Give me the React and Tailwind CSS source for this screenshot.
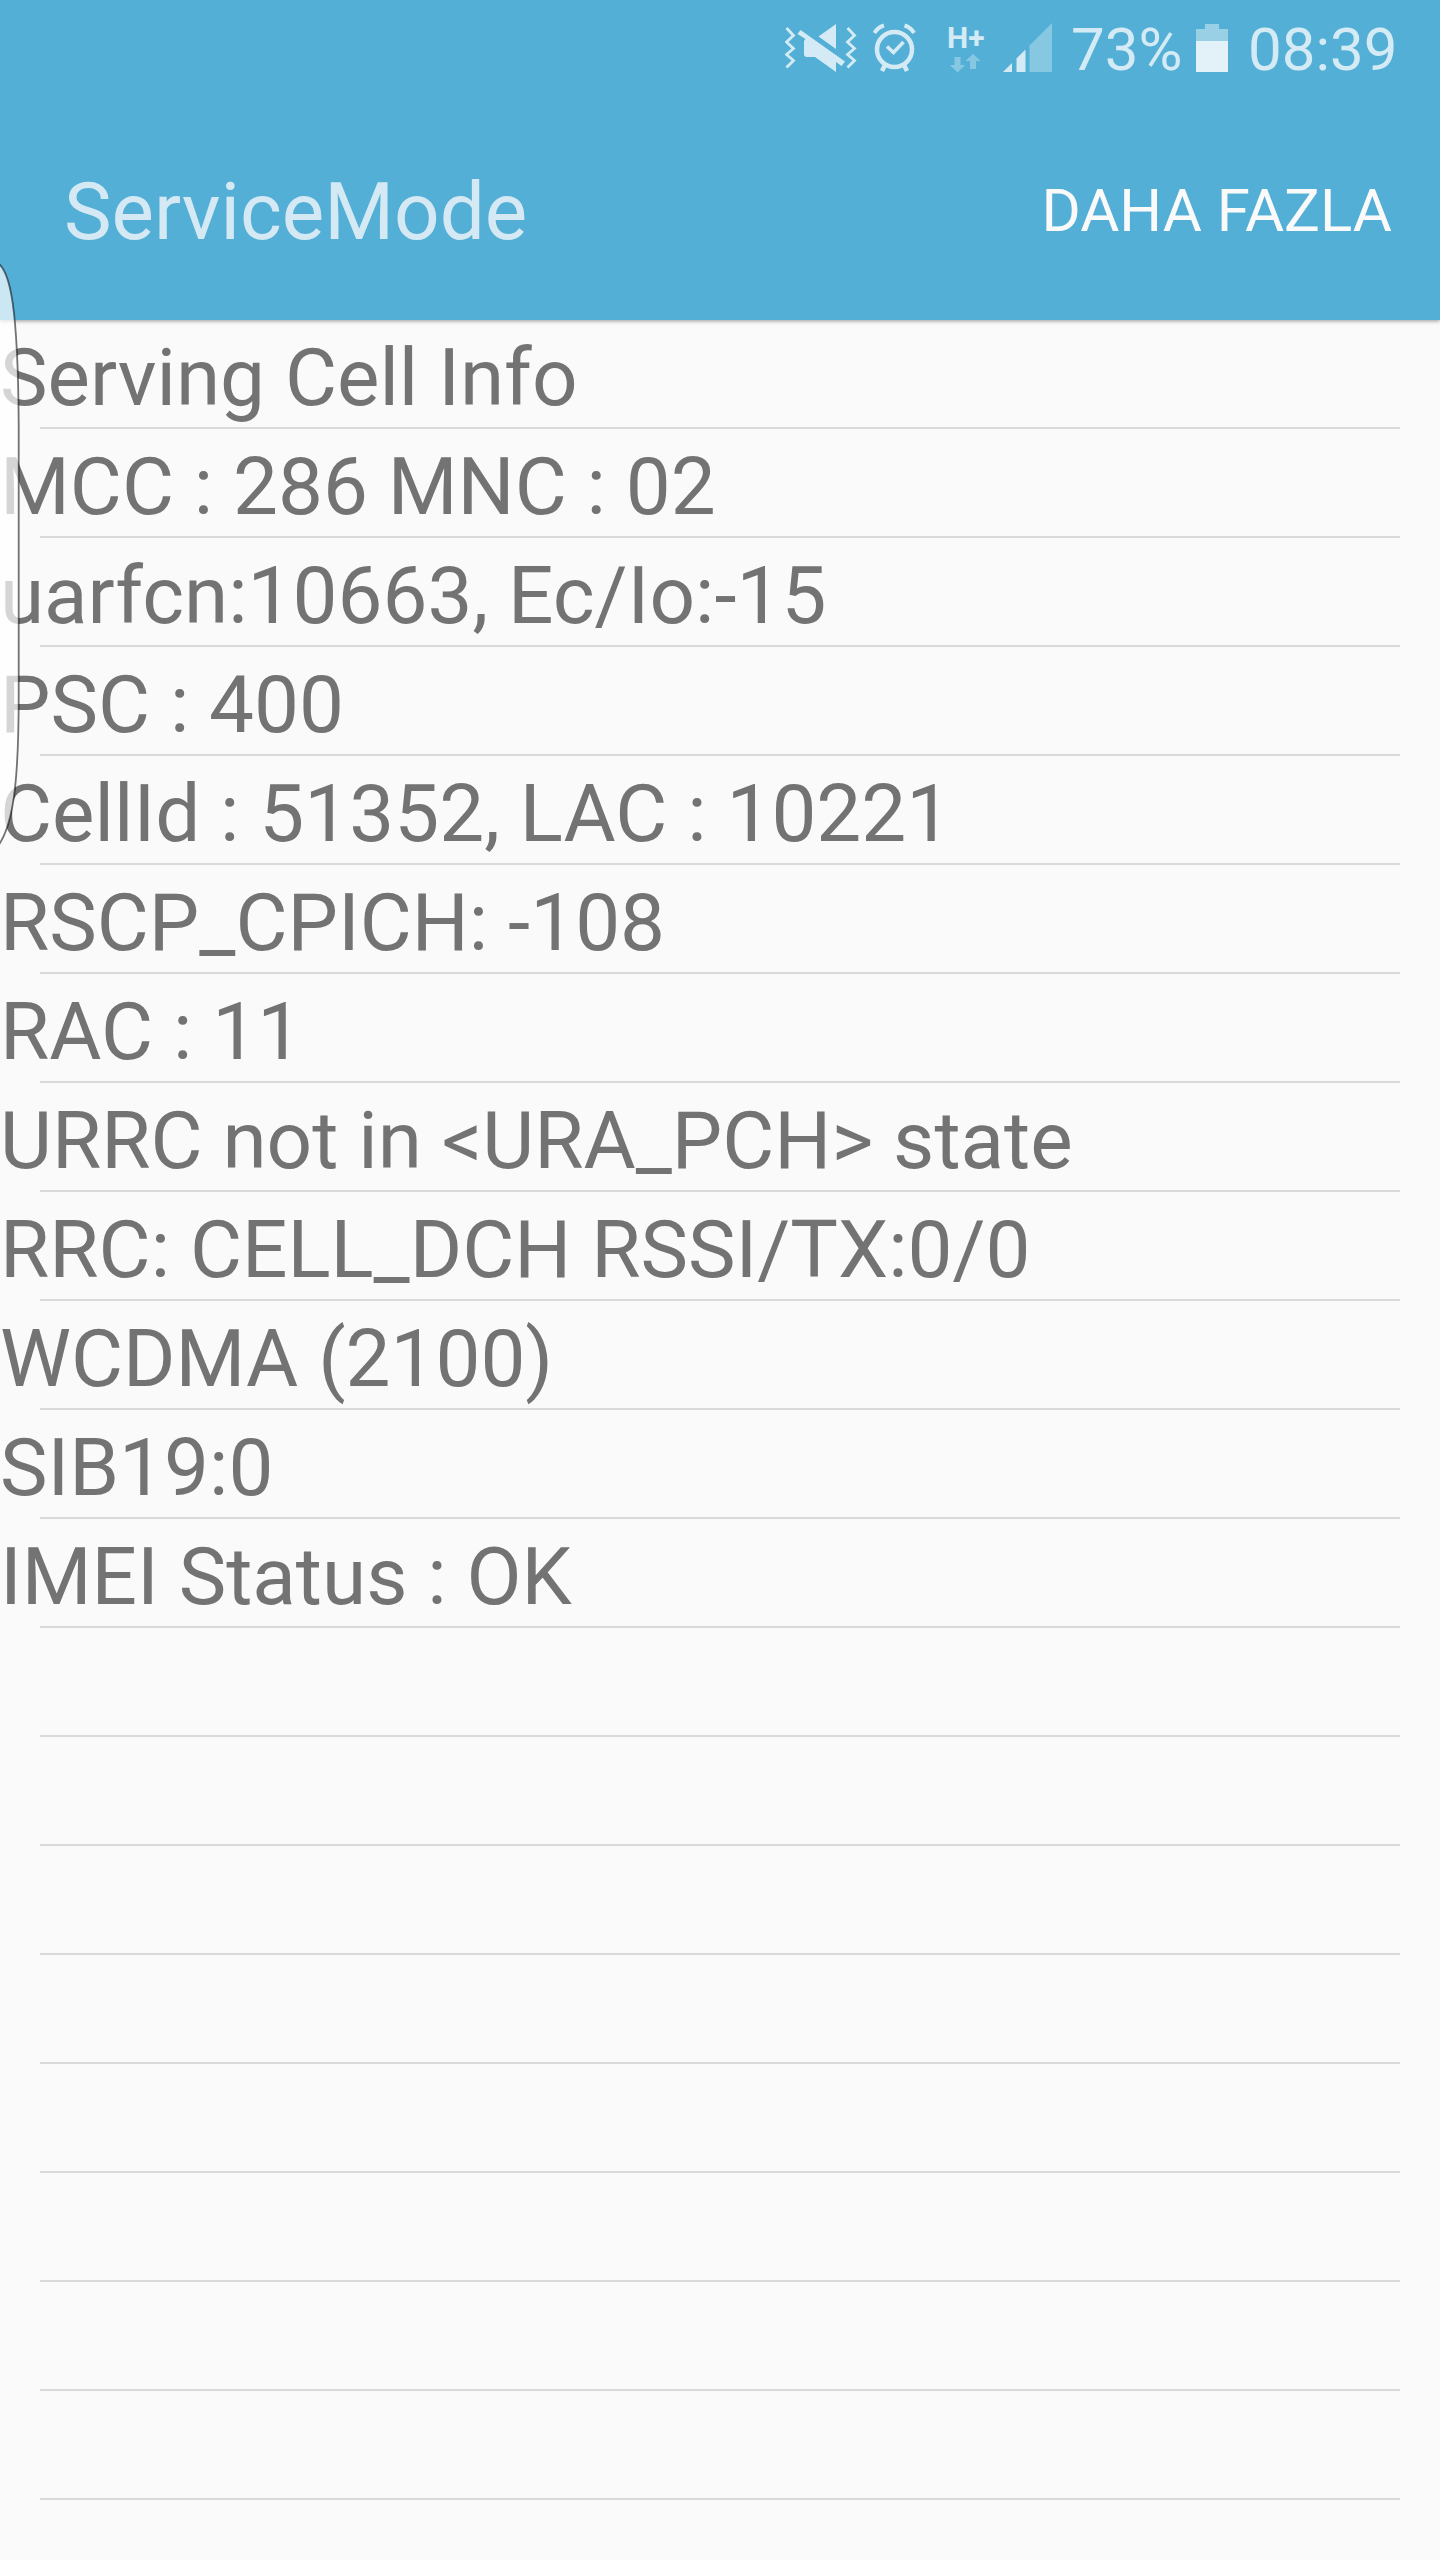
import { useState } from "react";

const lines = [
  "Serving Cell Info",
  "MCC : 286 MNC : 02",
  "uarfcn:10663, Ec/Io:-15",
  "PSC : 400",
  "CellId : 51352, LAC : 10221",
  "RSCP_CPICH: -108",
  "RAC : 11",
  "URRC not in <URA_PCH> state",
  "RRC: CELL_DCH RSSI/TX:0/0",
  "WCDMA (2100)",
  "SIB19:0",
  "IMEI Status : OK",
];

const ROW_COUNT = 21;

const VibrateMuteIcon = () => (
  <svg width="72" height="50" viewBox="0 0 72 50" className="mt-[23px]">
    <g fill="none" stroke="#d4ebf5" strokeWidth="2.8">
      <path d="M1.5 5 8.5 12.5 1.5 19 8.5 25.5 1.5 31.5 8.5 37.5 1.5 44.5" />
      <path d="M62.5 5 69.5 12.5 62.5 19 69.5 25.5 62.5 31.5 69.5 37.5 62.5 44.5" />
    </g>
    <path fill="#d4ebf5" d="M51 1v25L33.5 13.5z" />
    <path
      fill="#d4ebf5"
      d="M15.5 7 60 38.5 56.5 43 51 39V49L30 34H22Q19 34 19 31V18L20.5 16 12.5 11z"
    />
  </svg>
);

const AlarmIcon = () => (
  <svg width="44" height="50" viewBox="0 0 44 50" className="ml-[15px] mt-[23px]">
    <g fill="none" stroke="#d4ebf5">
      <circle cx="22.5" cy="26.5" r="17.5" strokeWidth="4.5" />
      <path strokeWidth="3.6" d="M15 23.5 21.5 29.5 31.5 19" />
      <path strokeWidth="4" d="M2.5 10Q5.5 4.5 12 2.5M42 10Q39 4.5 32.5 2.5" />
      <path strokeWidth="4.5" d="M13 42 10 48M32 42 35 48" />
    </g>
  </svg>
);

const DataIcon = () => (
  <div className="relative ml-[32px] mt-[23px] h-[50px] w-[38px]">
    <span className="absolute -left-px top-0 text-[30px] leading-[30px] font-bold">
      H+
    </span>
    <svg width="38" height="50" viewBox="0 0 38 50" className="absolute inset-0">
      <path fill="#86c7e1" d="M6.5 34h6v8h4.5l-7.5 7.5L2 42h4.5z" />
      <path fill="#86c7e1" d="M22 46V38h-4.5L25 31l7.5 7H28v8z" />
    </svg>
  </div>
);

const SignalIcon = () => (
  <svg width="50" height="49" viewBox="0 0 50 49" className="ml-[17px] mt-[23px]">
    <path fill="#d4ebf5" d="M0 49 9 40V49z" />
    <path fill="#d4ebf5" d="M13.5 49V35.5L22.5 26.5V49z" />
    <path fill="#86c7e1" d="M26.5 49V22.5L49 0V49z" />
  </svg>
);

const BatteryIcon = () => (
  <svg width="32" height="48" viewBox="0 0 32 48" className="mt-6">
    <path fill="#99d0e6" d="M9 0H23V5H32V17H0V5H9z" />
    <path fill="#e3f2f8" d="M0 17H32V48H0z" />
  </svg>
);

const StatusBar = () => (
  <div className="flex h-24 items-start pl-[785px] text-[#d4ebf5]">
    <VibrateMuteIcon />
    <AlarmIcon />
    <DataIcon />
    <SignalIcon />
    <span className="ml-[18px] mt-[15px] w-[125px] whitespace-nowrap text-[60px] leading-[70px]">
      73%
    </span>
    <BatteryIcon />
    <span className="ml-[20px] mt-[15px] whitespace-nowrap text-[60px] leading-[70px]">
      08:39
    </span>
  </div>
);

// Translucent handle of the edge panel, sits on top of the list
const EdgeHandle = () => (
  <svg
    width="24"
    height="600"
    viewBox="0 0 24 600"
    className="pointer-events-none absolute left-0 top-[255px]"
  >
    <path
      d="M-2 8C10 17 18 50 18.7 170V440C18.7 530 13 570 -2 591"
      fill="#ffffff"
      fillOpacity="0.7"
      stroke="#000000"
      strokeOpacity="0.55"
      strokeWidth="1.8"
    />
  </svg>
);

const App = () => {
  const [rows] = useState(
    Array.from({ length: ROW_COUNT }, (_, i) => lines[i] || "")
  );

  return (
    <div
      className="relative h-[2560px] w-[1440px] overflow-hidden bg-[#fafafa]"
      style={{ fontFamily: "Roboto, sans-serif" }}
    >
      {/* Header */}
      <header className="relative h-80 bg-[#53afd5] shadow-[0_1px_4px_rgba(0,0,0,0.4)]">
        <StatusBar />
        <div className="flex items-start justify-between pl-16 pr-12">
          <h1 className="mt-[69px] text-[80px] leading-[94px] text-[#d4e9f3]">
            ServiceMode
          </h1>
          <button className="mt-[80px] text-[60px] leading-[70px] text-[#fafafa]">
            DAHA FAZLA
          </button>
        </div>
      </header>

      {/* Info list */}
      <ul>
        {rows.map((text, i) => (
          <li key={i} className="h-[109px]">
            <p className="h-[107px] whitespace-nowrap pt-[9px] text-[80px] leading-[99px] text-[#737373]">
              {text}
            </p>
            <div className="mx-10 h-0.5 bg-[#d9d9d9]" />
          </li>
        ))}
      </ul>

      <EdgeHandle />
    </div>
  );
};

export default App;
